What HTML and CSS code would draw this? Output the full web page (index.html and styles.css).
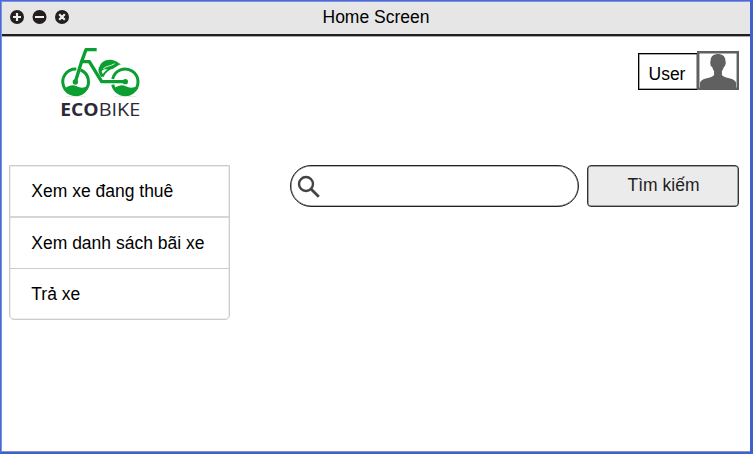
FILE: index.html
```html
<!DOCTYPE html>
<html lang="vi">
<head>
<meta charset="utf-8">
<title>Home Screen</title>
<link rel="stylesheet" href="styles.css">
</head>
<body>
<div class="window">
  <header class="titlebar">
    <svg class="controls" width="62" height="16" viewBox="0 0 62 16">
      <g fill="#231f20"><circle cx="8" cy="8" r="7"/><circle cx="30.5" cy="8" r="7"/><circle cx="53" cy="8" r="7"/></g>
      <g stroke="#eee" stroke-width="2.2"><path d="M4 8h8M8 4v8M26 8h9M50.200 5.200l5.600 5.600M55.800 5.200l-5.600 5.600"/></g>
    </svg>
    <h1 class="title">Home Screen</h1>
  </header>
  <div class="top">
    <svg class="logo" width="100" height="85" viewBox="0 0 300 255">
      <g fill="none" stroke="#0b9e30" stroke-width="9">
        <path d="M79 87A38.500 38.500 0 1 0 92 90"/>
        <path d="M188 117A38.500 38.500 0 1 1 188 134"/>
        <path d="M140 29H108L95 64L76 126M96 65H118L155 125H226" stroke-width="10" stroke-linejoin="round"/>
        <path d="M151 82Q147 97 158 109" stroke-width="9"/>
        <path d="M158 110C164 94 174 87 190 82" stroke-width="6"/>
      </g>
      <g fill="#0b9e30">
        <circle cx="76" cy="126" r="8"/><circle cx="226" cy="125" r="8"/>
        <path d="M147 88C149 65 169 57 187 60C197 61 205 69 213 73C200 77 193 88 178 88C170 89 160 85 154 95Q149 92 147 88Z"/>
        <path d="M46 144C64 130 77 136 88 142Q100 145 111 139C103 161 87 166 76 166Q57 164 46 144Z"/>
        <path d="M194 144C211 130 225 136 235 142Q248 145 262 139C252 161 237 166 226 166Q206 164 194 144Z"/>
      </g>
      <path d="M160 86C170 77 181 79 194 71" fill="none" stroke="#fff" stroke-width="2.500"/>
      <path d="M47 170h60M192 170h68" stroke="#ddd" stroke-width="2"/>
      <g class="brand"><text class="eco" x="31" y="228" textLength="115" lengthAdjust="spacingAndGlyphs">ECO</text><text x="146" y="228" textLength="125" lengthAdjust="spacingAndGlyphs">BIKE</text></g>
    </svg>
    <div class="user">
      <span class="username">User</span>
      <svg class="avatar" width="42" height="39" viewBox="0 0 43 39" preserveAspectRatio="none">
        <rect x="1.250" y="1.250" width="40.500" height="36.500" fill="#fff" stroke="#606060" stroke-width="2.500"/>
        <path fill="#606060" d="M14 9C14 1 29 1 29 9L29.500 12Q29 15 27.500 16Q26.500 19 25.500 20V24Q27 26 34 27.500Q39.500 29 40 32V37H3V32Q3.500 29 9 27.500Q16 26 17.500 24V20Q16.500 19 15.500 16Q13.500 15 13.500 12Z"/>
      </svg>
    </div>
  </div>
  <main class="main">
    <ul class="menu"><li>Xem xe đang thuê</li><li>Xem danh sách bãi xe</li><li>Trả xe</li></ul>
    <div class="search">
      <svg width="24" height="24" viewBox="0 0 24 24" fill="none" stroke="#444"><circle cx="9" cy="9" r="7" stroke-width="2.400"/><path d="M14 14l7.800 7.800" stroke-width="2.800"/></svg>
    </div>
    <button class="button">Tìm kiếm</button>
  </main>
</div>
</body>
</html>
```
FILE: styles.css
```css
* { box-sizing: border-box; }
body { margin: 0; background: #fff; font: 17.5px/20px "Liberation Sans", Arial, sans-serif; color: #000; }
.window { width: 753px; height: 454px; border: solid #4166dc; border-width: 1px 3px 2px 1px; border-color: #4169e8 #4060cc #4060cc #4169e8; box-shadow: inset 1px 1px #8493cf, inset 0 -1px #8795bd; background: #fff; }
.titlebar { position: relative; height: 35px; margin: 0 0 0 1px; border-top: 1px solid #8493cf; background: #e6e6e6; border-bottom: 2px solid #231f20; box-shadow: 0 1px #aaa; display: flex; justify-content: center; }
.controls { position: absolute; left: 7px; top: 7px; }
.title { margin: 5px 0 0; font-size: 17.5px; font-weight: 400; line-height: 20px; }
.top { display: flex; justify-content: space-between; align-items: flex-start; height: 129px; padding: 4px 11px 0 49px; }
.brand { font: 400 52px "Open Sans", sans-serif; fill: #2c2a38; }
.eco { font-weight: 700; }
.user { display: flex; align-items: flex-end; margin-top: 11px; }
.username { width: 59px; height: 37px; border: 1px solid #000; box-shadow: inset 0 0 0 .5px #555; border-right: 0; padding: 10px 0 0 9.5px; line-height: 20px; }
.avatar { display: block; }
.main { display: flex; align-items: flex-start; padding-left: 8px; }
.menu { width: 221px; margin: 0; padding: 0; list-style: none; border: 1px solid #ccc; box-shadow: inset 0 0 0 .5px #ddd; border-radius: 0 0 5px 5px; }
.menu li { height: 51px; padding: 15px 0 0 21.3px; border-bottom: 1px solid #ccc; }
.menu li:first-child { border-bottom: 2px solid #d6d6d6; height: 52px; }
.menu li:last-child { border: 0; height: 50px; }
.search { width: 289px; height: 42px; margin-left: 60px; border: 1px solid #222; box-shadow: inset 0 0 0 .5px #666; border-radius: 21px; padding: 9px 6px; }
.search svg { display: block; }
.button { width: 152px; height: 42px; margin: 0 0 0 8px; padding: 0 0 3px 1px; border: 1px solid #333; box-shadow: inset 0 0 0 .5px #555; border-radius: 4px; background: #ebebeb; color: #222; font: inherit; }
```
